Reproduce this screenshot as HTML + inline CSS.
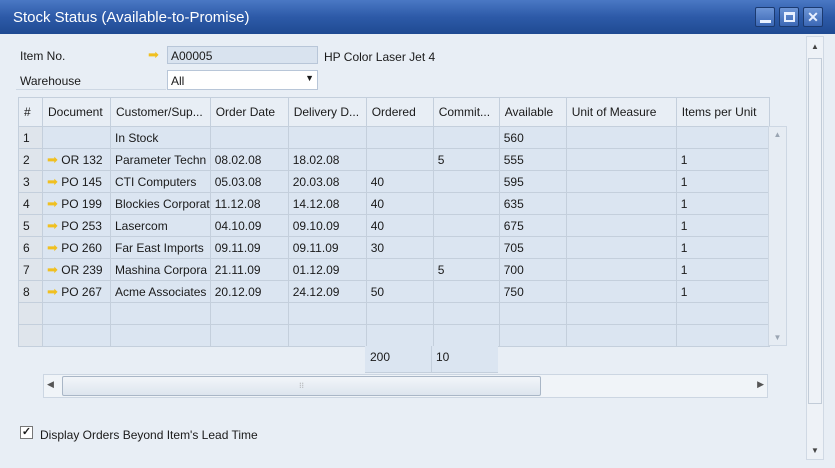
<!DOCTYPE html>
<html><head><style>
*{margin:0;padding:0;box-sizing:border-box}
body{width:835px;height:468px;overflow:hidden;background:#e8eef5;font-family:"Liberation Sans",sans-serif;font-size:12px;color:#1a1a1a;position:relative}
.title{position:absolute;left:0;top:0;width:835px;height:34px;background:linear-gradient(#4a78c4,#2d5aa8 50%,#1f4a92);color:#fff;font-size:15px;padding:9px 13px}
.wb{position:absolute;top:7px;width:20px;height:20px;border:1px solid #1b3a70;background:linear-gradient(#6d95d6,#3b67b5);border-radius:2px}
.abs{position:absolute}
table{position:absolute;left:18px;top:97px;border-collapse:collapse;table-layout:fixed}
td{border:1px solid #c4cfdc;height:22px;padding:0 0 0 4px;white-space:nowrap;overflow:hidden;background:#dbe5f1}
tr.h td{height:29px;background:#e8eef5;padding-left:5px}
td.n{background:#dfe5ec}
.arr{color:#f0c020;font-size:13px}
</style></head><body>
<div class="title">Stock Status (Available-to-Promise)</div>
<div class="wb" style="left:755px"><div class="abs" style="left:4px;top:12px;width:11px;height:3px;background:#e8f0ff"></div></div>
<div class="wb" style="left:779px"><div class="abs" style="left:4px;top:4px;width:11px;height:10px;border:2px solid #e8f0ff;border-top-width:3px"></div></div>
<div class="wb" style="left:803px;color:#e8f0ff;font-weight:bold;font-size:14px;text-align:center;line-height:18px">✕</div>

<div class="abs" style="left:20px;top:49px">Item No.</div>
<div class="abs arr" style="left:148px;top:47px">➡</div>
<div class="abs" style="left:167px;top:46px;width:151px;height:18px;background:#d9e3ef;border:1px solid #b8c6d8;padding:2px 3px">A00005</div>
<div class="abs" style="left:324px;top:50px">HP Color Laser Jet 4</div>
<div class="abs" style="left:20px;top:74px">Warehouse</div>
<div class="abs" style="left:16px;top:89px;width:150px;height:1px;background:#cdd7e3"></div>
<div class="abs" style="left:167px;top:70px;width:151px;height:20px;background:#fff;border:1px solid #b8c6d8;padding:3px 3px">All<span class="abs" style="right:3px;top:2px;font-size:9px">▼</span></div>

<table>
<colgroup><col style="width:24px"><col style="width:68px"><col style="width:99px"><col style="width:78px"><col style="width:78px"><col style="width:67px"><col style="width:66px"><col style="width:67px"><col style="width:110px"><col style="width:93px"></colgroup>
<tr class="h"><td>#</td><td>Document</td><td>Customer/Sup...</td><td>Order Date</td><td>Delivery D...</td><td>Ordered</td><td>Commit...</td><td>Available</td><td>Unit of Measure</td><td>Items per Unit</td></tr>
<tr><td class="n">1</td><td></td><td>In Stock</td><td></td><td></td><td></td><td></td><td>560</td><td></td><td></td></tr>
<tr><td class="n">2</td><td><span class="arr">➡</span> OR 132</td><td>Parameter Techn</td><td>08.02.08</td><td>18.02.08</td><td></td><td>5</td><td>555</td><td></td><td>1</td></tr>
<tr><td class="n">3</td><td><span class="arr">➡</span> PO 145</td><td>CTI Computers</td><td>05.03.08</td><td>20.03.08</td><td>40</td><td></td><td>595</td><td></td><td>1</td></tr>
<tr><td class="n">4</td><td><span class="arr">➡</span> PO 199</td><td>Blockies Corporat</td><td>11.12.08</td><td>14.12.08</td><td>40</td><td></td><td>635</td><td></td><td>1</td></tr>
<tr><td class="n">5</td><td><span class="arr">➡</span> PO 253</td><td>Lasercom</td><td>04.10.09</td><td>09.10.09</td><td>40</td><td></td><td>675</td><td></td><td>1</td></tr>
<tr><td class="n">6</td><td><span class="arr">➡</span> PO 260</td><td>Far East Imports</td><td>09.11.09</td><td>09.11.09</td><td>30</td><td></td><td>705</td><td></td><td>1</td></tr>
<tr><td class="n">7</td><td><span class="arr">➡</span> OR 239</td><td>Mashina Corpora</td><td>21.11.09</td><td>01.12.09</td><td></td><td>5</td><td>700</td><td></td><td>1</td></tr>
<tr><td class="n">8</td><td><span class="arr">➡</span> PO 267</td><td>Acme Associates</td><td>20.12.09</td><td>24.12.09</td><td>50</td><td></td><td>750</td><td></td><td>1</td></tr>
<tr><td class="n"></td><td></td><td></td><td></td><td></td><td></td><td></td><td></td><td></td><td></td></tr>
<tr><td class="n"></td><td></td><td></td><td></td><td></td><td></td><td></td><td></td><td></td><td></td></tr>
</table>
<div class="abs" style="left:768px;top:126px;width:19px;height:220px;background:#e6ecf3;border:1px solid #cdd7e3;color:#9aa5b2;font-size:8px;text-align:center"><div style="margin-top:3px">▲</div><div style="position:absolute;bottom:3px;width:17px">▼</div></div>
<div class="abs" style="left:365px;top:346px;width:133px;height:27px;background:#dbe5f1;border-bottom:1px solid #c4cfdc"><span class="abs" style="left:5px;top:4px">200</span><span class="abs" style="left:71px;top:4px">10</span><div class="abs" style="left:66px;top:0;width:1px;height:27px;background:#c4cfdc"></div></div>
<div class="abs" style="left:43px;top:374px;width:725px;height:24px;background:#f0f4f8;border:1px solid #ccd6e2">
<span class="abs" style="left:3px;top:4px;font-size:9px;color:#555">◀</span>
<div class="abs" style="left:18px;top:1px;width:479px;height:20px;background:linear-gradient(#f2f5f9,#dde5ee);border:1px solid #a9b6c6;border-radius:2px;text-align:center;font-size:8px;color:#999;line-height:18px">⁝⁝</div>
<span class="abs" style="right:3px;top:4px;font-size:9px;color:#555">▶</span></div>
<div class="abs" style="left:806px;top:36px;width:18px;height:424px;background:#eef2f7;border:1px solid #d0d9e4;color:#444;font-size:8px;text-align:center">
<div style="margin-top:5px">▲</div>
<div class="abs" style="left:1px;top:21px;width:14px;height:346px;border:1px solid #c2ccd8;background:#eef2f7"></div>
<div class="abs" style="bottom:4px;width:16px">▼</div></div>
<div class="abs" style="left:20px;top:426px;width:13px;height:13px;border:1px solid #777;background:#fff;font-size:11px;line-height:11px;text-align:center;font-weight:bold">✓</div>
<div class="abs" style="left:40px;top:428px">Display Orders Beyond Item's Lead Time</div>
</body></html>
